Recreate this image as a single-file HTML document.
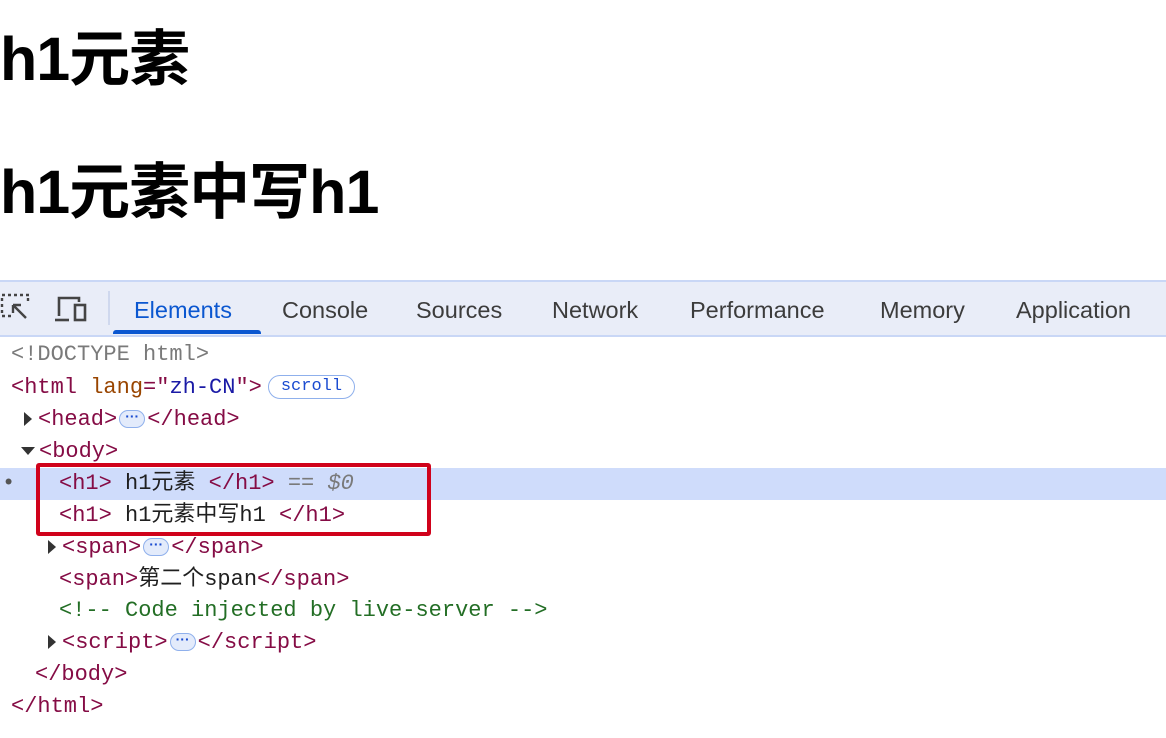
<!DOCTYPE html>
<html><head><meta charset="utf-8"><style>
body{margin:0;width:1166px;height:738px;overflow:hidden;background:#fff;position:relative;font-family:"Liberation Sans","Noto Sans CJK SC",sans-serif}
.h{position:absolute;left:0;font-size:61px;font-weight:bold;color:#000;line-height:1;white-space:nowrap;letter-spacing:-1px}
.bar{position:absolute;left:0;top:280px;width:1166px;height:53px;background:#e9edf8;border-top:2px solid #c9d7f6;border-bottom:2px solid #c9d7f6}
.tab{position:absolute;top:296px;font-size:23.5px;color:#3c3c3c;white-space:nowrap;line-height:28px}
.l{position:absolute;font-family:"Liberation Mono","Noto Sans CJK SC",monospace;font-size:22px;white-space:pre;line-height:32px;color:#1f1f1f}
.t{color:#850c45}.g{color:#7a7a7a}.a{color:#994500}.v{color:#1a1aa6}.c{color:#236e25}
.tri{display:inline-block;width:0;height:0;border-left:8px solid #333;border-top:7px solid transparent;border-bottom:7px solid transparent;vertical-align:middle;margin-right:6px}
.trd{display:inline-block;width:0;height:0;border-top:8px solid #333;border-left:7px solid transparent;border-right:7px solid transparent;vertical-align:middle;margin-right:4px}
.dots{display:inline-block;width:24px;height:16px;border:1.5px solid #8fb0ec;border-radius:9px;background:#e3ebfb;vertical-align:middle;text-align:center;font-size:14px;line-height:10px;color:#1a4bd0;font-weight:bold;font-family:"Liberation Sans",sans-serif;margin:0 2px}
</style></head><body>
<div class="h" style="top:29px">h1元素</div>
<div class="h" style="top:162px">h1元素中写h1</div>
<div class="bar"></div>
<svg style="position:absolute;left:0;top:292px" width="34" height="34" viewBox="0 0 34 34"><g fill="none" stroke="#444" stroke-width="2.4"><path d="M2 3h3M8 3h3M14 3h3M20 3h3M26 3h3M28 6v3M28 12v0M2 6v3M2 12v3M2 18v3M2 24h3M8 24h3"/><path d="M13 13l13 13M13 13h8M13 13v8"/></g></svg>
<svg style="position:absolute;left:54px;top:294px" width="36" height="30" viewBox="0 0 36 30"><g fill="none" stroke="#444" stroke-width="2.6"><path d="M5 22V4h20v4"/><path d="M1 26h14"/><rect x="21" y="11" width="10" height="15"/></g></svg>
<div style="position:absolute;left:108px;top:291px;width:2px;height:34px;background:#cfd8ee"></div>
<div class="tab" style="left:134px;color:#0b57d0">Elements</div>
<div style="position:absolute;left:113px;top:330px;width:148px;height:4px;background:#0b57d0;border-radius:3px 3px 0 0"></div>
<div class="tab" style="left:282px">Console</div>
<div class="tab" style="left:416px">Sources</div>
<div class="tab" style="left:552px">Network</div>
<div class="tab" style="left:690px">Performance</div>
<div class="tab" style="left:880px">Memory</div>
<div class="tab" style="left:1016px">Application</div>
<div style="position:absolute;left:0;top:468px;width:1166px;height:32px;background:#cfdcfb"></div>
<div class="l g" style="left:11px;top:339px">&lt;!DOCTYPE html&gt;</div>
<div class="l" style="left:11px;top:372px"><span class="t">&lt;html </span><span class="a">lang</span><span class="t">="</span><span class="v">zh-CN</span><span class="t">"&gt;</span><span style="display:inline-block;border:1.5px solid #8fb0ec;border-radius:13px;font-size:17px;line-height:22px;padding:0 12px;color:#1a4bd0;vertical-align:middle;background:#fff;margin-left:6px">scroll</span></div>
<div class="l" style="left:24px;top:404px"><span class="tri"></span><span class="t">&lt;head&gt;</span><span class="dots">···</span><span class="t">&lt;/head&gt;</span></div>
<div class="l" style="left:21px;top:436px"><span class="trd"></span><span class="t">&lt;body&gt;</span></div>
<div class="l" style="left:2px;top:468px;color:#555">•</div>
<div class="l" style="left:59px;top:468px"><span class="t">&lt;h1&gt;</span> h1元素 <span class="t">&lt;/h1&gt;</span> <span class="g">== <i>$0</i></span></div>
<div class="l" style="left:59px;top:500px"><span class="t">&lt;h1&gt;</span> h1元素中写h1 <span class="t">&lt;/h1&gt;</span></div>
<div style="position:absolute;left:36px;top:463px;width:387px;height:65px;border:4px solid #d0021b;border-radius:3px"></div>
<div class="l" style="left:48px;top:532px"><span class="tri"></span><span class="t">&lt;span&gt;</span><span class="dots">···</span><span class="t">&lt;/span&gt;</span></div>
<div class="l" style="left:59px;top:564px"><span class="t">&lt;span&gt;</span>第二个span<span class="t">&lt;/span&gt;</span></div>
<div class="l c" style="left:59px;top:595px">&lt;!-- Code injected by live-server --&gt;</div>
<div class="l" style="left:48px;top:627px"><span class="tri"></span><span class="t">&lt;script&gt;</span><span class="dots">···</span><span class="t">&lt;/script&gt;</span></div>
<div class="l t" style="left:35px;top:659px">&lt;/body&gt;</div>
<div class="l t" style="left:11px;top:691px">&lt;/html&gt;</div>
</body></html>
